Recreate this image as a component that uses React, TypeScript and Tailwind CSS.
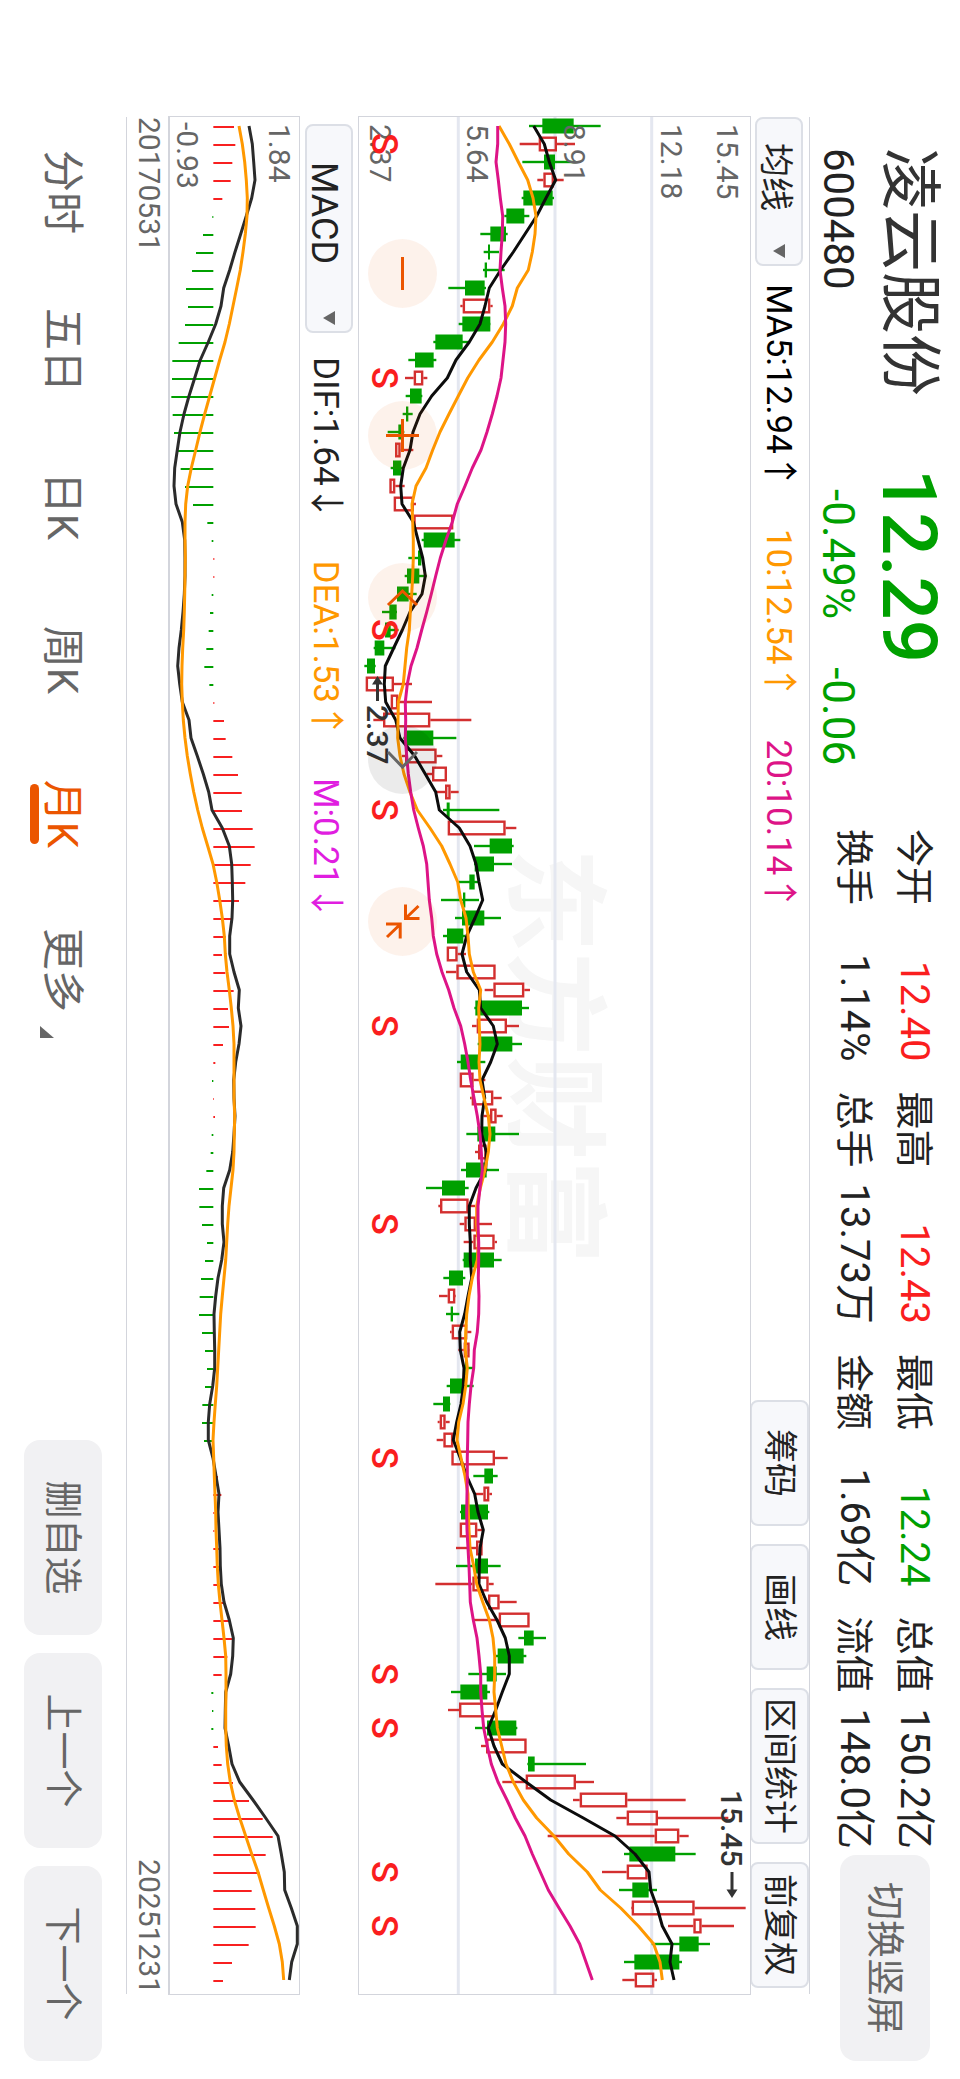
import React from "react";

type Candle = [kind: "G" | "R", low: number, from: number, to: number, high: number];

// One entry per month, measured in thirds of a chart unit above the baseline.
const candles: Candle[] = [
  ["G", 537, 577, 671, 752], ["R", 509, 566, 621, 675], ["G", 517, 582, 615, 678], ["R", 562, 580, 612, 641],
  ["G", 515, 520, 608, 612], ["G", 463, 469, 523, 538], ["G", 391, 421, 468, 473], ["G", 401, 414, 420, 447],
  ["G", 399, 404, 411, 464], ["G", 295, 345, 404, 408], ["R", 331, 338, 421, 428], ["G", 326, 337, 421, 421],
  ["G", 250, 256, 338, 360], ["G", 175, 195, 251, 259], ["R", 165, 191, 220, 232], ["G", 167, 180, 215, 217],
  ["G", 158, 168, 175, 188], ["G", 113, 145, 161, 163], ["R", 135, 135, 152, 190], ["G", 122, 129, 154, 158],
  ["R", 118, 118, 136, 164], ["R", 131, 131, 192, 198], ["R", 190, 190, 310, 310], ["G", 215, 221, 314, 331],
  ["G", 175, 204, 214, 214], ["G", 164, 171, 208, 230], ["G", 141, 141, 176, 200], ["G", 96, 118, 140, 141],
  ["G", 105, 105, 122, 146], ["G", 71, 74, 103, 136], ["G", 43, 51, 75, 77], ["R", 47, 47, 132, 186],
  ["R", 122, 122, 145, 246], ["R", 70, 99, 241, 364], ["G", 160, 165, 250, 319], ["R", 155, 165, 260, 277],
  ["R", 230, 246, 291, 291], ["R", 255, 285, 302, 326], ["G", 279, 290, 299, 448], ["R", 293, 293, 467, 499],
  ["G", 372, 419, 486, 491], ["G", 372, 374, 432, 486], ["G", 327, 358, 374, 385], ["G", 273, 339, 346, 387],
  ["G", 315, 336, 403, 453], ["G", 279, 291, 340, 345], ["R", 290, 290, 323, 348], ["R", 288, 319, 437, 437],
  ["R", 404, 430, 523, 540], ["G", 373, 376, 516, 537], ["R", 366, 380, 471, 507], ["G", 383, 386, 487, 516],
  ["G", 321, 332, 386, 406], ["R", 329, 329, 371, 406], ["R", 360, 365, 430, 455], ["R", 400, 420, 440, 458],
  ["G", 349, 382, 436, 507], ["R", 375, 384, 410, 412], ["G", 333, 348, 410, 447], ["G", 228, 276, 345, 356],
  ["R", 265, 270, 356, 375], ["R", 329, 343, 378, 426], ["R", 341, 370, 434, 441], ["G", 338, 341, 432, 455],
  ["G", 280, 297, 339, 346], ["R", 267, 293, 316, 318], ["G", 288, 302, 309, 328], ["R", 300, 305, 352, 364],
  ["R", 325, 341, 359, 360], ["G", 340, 345, 352, 370], ["G", 290, 300, 340, 371], ["G", 250, 279, 300, 301],
  ["R", 263, 269, 287, 299], ["R", 260, 280, 310, 312], ["R", 304, 304, 435, 473], ["G", 370, 403, 429, 443],
  ["R", 375, 400, 418, 426], ["G", 330, 333, 414, 418], ["R", 329, 329, 382, 400], ["R", 318, 378, 398, 398],
  ["G", 318, 375, 414, 452], ["R", 256, 367, 416, 431], ["R", 410, 414, 449, 500], ["R", 370, 446, 539, 539],
  ["G", 505, 522, 551, 588], ["G", 436, 443, 521, 529], ["G", 355, 410, 440, 468], ["G", 303, 331, 412, 420],
  ["R", 294, 327, 440, 440], ["G", 375, 411, 499, 502], ["R", 393, 408, 530, 530], ["G", 532, 534, 554, 708],
  ["R", 457, 527, 678, 732], ["R", 669, 689, 832, 1007], ["R", 799, 830, 924, 1135], ["R", 593, 914, 988, 1016],
  ["G", 822, 838, 976, 1037], ["R", 756, 830, 893, 895], ["G", 807, 847, 896, 921], ["R", 843, 845, 1034, 1187],
  ["R", 954, 1030, 1055, 1152], ["G", 905, 988, 1046, 1080], ["G", 822, 853, 988, 996], ["R", 817, 854, 913, 921],
];

const ma5 = [
  551, 583, 598, 617, 588, 560, 525, 490, 452, 418, 405, 390, 358, 318, 292, 245, 210, 189, 180, 160, 152, 156, 190, 204,
  218, 226, 216, 180, 157, 131, 106, 103, 107, 137, 150, 194, 226, 257, 268, 328, 360, 378, 387, 398, 375, 350, 336, 350,
  388, 392, 430, 442, 422, 396, 404, 396, 395, 409, 407, 378, 358, 358, 361, 361, 365, 354, 344, 329, 331, 342, 340, 333,
  320, 310, 331, 350, 374, 384, 400, 390, 388, 387, 410, 441, 466, 478, 478, 457, 437, 415, 432, 457, 528, 602, 700, 795,
  855, 897, 902, 922, 937, 966, 960, 972,
];

const ma10 = [
  447, 478, 505, 533, 549, 558, 555, 547, 535, 502, 487, 460, 427, 387, 353, 325, 297, 270, 248, 228, 198, 186, 188, 190,
  190, 188, 185, 181, 178, 170, 165, 160, 145, 144, 143, 150, 162, 180, 202, 240, 275, 300, 323, 332, 348, 354, 358, 370,
  392, 386, 388, 390, 387, 390, 402, 415, 420, 415, 405, 391, 380, 380, 385, 382, 367, 357, 350, 347, 346, 352, 347, 339,
  326, 321, 333, 345, 354, 355, 357, 360, 371, 380, 398, 418, 429, 434, 434, 432, 437, 442, 455, 468, 490, 520, 560, 612,
  656, 712, 751, 812, 865, 911, 930, 937,
];

const ma20 = [
  443, 443, 438, 445, 451, 458, 457, 453, 450, 457, 465, 467, 465, 459, 453, 441, 427, 411, 393, 367, 345, 322, 307, 288,
  271, 257, 244, 230, 215, 201, 183, 172, 166, 167, 166, 170, 175, 182, 191, 205, 220, 230, 234, 238, 245, 250, 260, 276,
  296, 312, 332, 344, 354, 362, 372, 382, 390, 394, 397, 390, 384, 384, 386, 386, 385, 387, 386, 382, 373, 371, 363, 358,
  354, 353, 352, 352, 351, 350, 351, 354, 357, 359, 361, 370, 381, 387, 392, 392, 396, 401, 412, 424, 444, 471, 496, 525,
  547, 571, 595, 627, 660, 689, 708, 727,
];

const bars = [
  345, 349, 340, 335, 310, 280, 252, 231, 219, 201, 207, 198, 179, 160, 159, 157, 161, 165, 177, 185, 198, 222, 265, 278,
  286, 286, 278, 273, 269, 262, 256, 271, 286, 315, 320, 340, 357, 368, 369, 401, 407, 395, 379, 360, 340, 320, 309, 319,
  344, 327, 330, 312, 289, 279, 285, 288, 278, 275, 262, 240, 241, 249, 264, 258, 246, 242, 240, 249, 258, 264, 258, 250,
  249, 255, 287, 297, 307, 286, 286, 300, 300, 300, 312, 330, 343, 325, 308, 277, 279, 277, 297, 308, 342, 390, 431, 461,
  440, 421, 398, 409, 410, 389, 339, 312,
];

const dif = [
  390, 400, 404, 408, 398, 382, 365, 348, 332, 314, 306, 290, 268, 244, 227, 210, 195, 183, 175, 167, 165, 171, 190, 197,
  198, 198, 196, 192, 187, 180, 176, 182, 190, 210, 216, 235, 253, 269, 279, 310, 331, 338, 340, 341, 339, 332, 332, 345,
  361, 358, 366, 360, 350, 344, 345, 348, 345, 341, 332, 314, 310, 310, 315, 308, 297, 290, 285, 286, 287, 287, 281, 272,
  268, 268, 282, 291, 300, 297, 300, 303, 304, 307, 315, 331, 343, 341, 335, 320, 319, 318, 329, 339, 362, 402, 440, 477,
  487, 496, 497, 517, 535, 535, 518, 511,
];

const dea = [
  360, 370, 377, 382, 385, 384, 379, 372, 364, 353, 342, 331, 318, 302, 287, 272, 257, 243, 230, 217, 206, 200, 198, 198,
  199, 198, 197, 196, 194, 191, 189, 188, 190, 193, 198, 205, 214, 224, 236, 250, 266, 282, 293, 302, 310, 316, 319, 324,
  331, 337, 342, 345, 345, 345, 345, 347, 346, 345, 342, 336, 330, 326, 323, 320, 315, 310, 305, 302, 299, 296, 293, 289,
  285, 282, 284, 286, 288, 290, 291, 293, 295, 298, 303, 309, 315, 320, 321, 321, 320, 320, 322, 326, 334, 346, 362, 380,
  398, 417, 433, 449, 466, 481, 490, 494,
];

const sellMonths = [1, 14, 28, 38, 50, 61, 74, 86, 89, 97, 100];
const ZERO = 283;

const at = (i: number) => 9 + 18 * i;
const priceY = (v: number) => 400 - v / 3;
const macdY = (v: number) => 180 - v / 3;
const trace = (values: number[], y: (v: number) => number) =>
  values.map((v, i) => `${at(i)},${y(v).toFixed(1)}`).join(" ");

function CandleMark({ candle, index }: { candle: Candle; index: number }) {
  const [kind, low, from, to, high] = candle;
  const x = at(index);
  const top = priceY(to);
  const height = (to - from) / 3;
  if (kind === "G") {
    return (
      <g fill="#00a000">
        <rect x={x - 1.2} y={priceY(high)} width={2.4} height={(high - low) / 3} />
        <rect x={x - 7.5} y={top} width={15} height={height} />
      </g>
    );
  }
  return (
    <g stroke="#d32f2f" strokeWidth={2.4} fill="none">
      <line x1={x} x2={x} y1={priceY(high)} y2={top} />
      <line x1={x} x2={x} y1={priceY(from)} y2={priceY(low)} />
      <rect x={x - 6.3} y={top + 1.2} width={12.6} height={Math.max(height - 2.4, 1)} />
    </g>
  );
}

function PriceChart() {
  return (
    <svg viewBox="0 0 1877 391" className="block w-full" role="img" aria-label="月K">
      <text x={939} y={233} textAnchor="middle" fontSize={104} fontWeight={700} fill="#f6f6f6">东方财富</text>
      <g stroke="#e4e7f0" strokeWidth={3}>
        <line x1={0} x2={1877} y1={98.3} y2={98.3} />
        <line x1={0} x2={1877} y1={195} y2={195} />
        <line x1={0} x2={1877} y1={291.7} y2={291.7} />
      </g>
      {candles.map((c, i) => (
        <CandleMark key={i} candle={c} index={i} />
      ))}
      <g fontSize={30} fill="#666">
        <text x={7} y={33}>15.45</text>
        <text x={7} y={89}>12.18</text>
        <text x={7} y={186}>8.91</text>
        <text x={7} y={283}>5.64</text>
        <text x={7} y={380}>2.37</text>
      </g>
      <g fill="none" strokeWidth={3} strokeLinejoin="round">
        <polyline points={trace(ma5, priceY)} stroke="#0c0c0c" />
        <polyline points={trace(ma10, priceY)} stroke="#ff9800" />
        <polyline points={trace(ma20, priceY)} stroke="#dd1487" />
      </g>
      <g fontSize={36} fontWeight={500} fill="#fa1e1e" textAnchor="middle">
        {sellMonths.map((m) => (
          <text key={m} x={at(m)} y={378}>S</text>
        ))}
      </g>
      <g fontSize={30} fontWeight={500} fill="#333">
        <path d="M559 372.500L567.500 367v4H584v3H567.500v4Z" />
        <text x={588} y={383}>2.37</text>
        <text x={1673} y={29}>15.45</text>
        <path d="M1781 18L1772.500 12.500v4H1755v3h17.500v4Z" />
      </g>
    </svg>
  );
}

function MacdChart() {
  return (
    <svg viewBox="0 0 1877 129" className="block w-full" role="img" aria-label="MACD">
      {bars.map((v, i) => (
        <rect
          key={i}
          x={at(i)}
          y={macdY(Math.max(v, ZERO))}
          width={2}
          height={Math.abs(v - ZERO) / 3}
          fill={v > ZERO ? "#f82020" : "#00a000"}
        />
      ))}
      <g fontSize={30} fill="#666">
        <text x={7} y={30}>1.84</text>
        <text x={5} y={122}>-0.93</text>
      </g>
      <g fill="none" strokeWidth={3} strokeLinejoin="round">
        <polyline points={trace(dif, macdY)} stroke="#2b2b2b" />
        <polyline points={trace(dea, macdY)} stroke="#ff9800" />
      </g>
    </svg>
  );
}

function Picker({ label, value, size }: { label: string; value: string; size: string }) {
  return (
    <label className={`relative block h-12 ${size}`}>
      <select
        aria-label={label}
        className="h-full w-full appearance-none rounded-lg border-2 border-[#dcdfe6] bg-[#f7f8fb] text-[#222]"
        defaultValue={value}
      >
        <option>{value}</option>
      </select>
      <svg viewBox="0 0 14 12" className="pointer-events-none absolute top-[18px] right-2 h-3 w-3.5">
        <path d="M0 0h14L7 12Z" fill="#666" />
      </svg>
    </label>
  );
}

const stats = [
  { label: "今开", value: "12.40", tone: "text-[#fa1e1e]" },
  { label: "最高", value: "12.43", tone: "text-[#fa1e1e]" },
  { label: "最低", value: "12.24", tone: "text-[#00a000]" },
  { label: "总值", value: "150.2亿", tone: "text-[#222]" },
  { label: "换手", value: "1.14%", tone: "text-[#222]" },
  { label: "总手", value: "13.73万", tone: "text-[#222]" },
  { label: "金额", value: "1.69亿", tone: "text-[#222]" },
  { label: "流值", value: "148.0亿", tone: "text-[#222]" },
];

const tools = [
  { label: "筹码", size: "w-[126px]" },
  { label: "画线", size: "w-[126px]" },
  { label: "区间统计", size: "w-[156px]" },
  { label: "前复权", size: "w-[126px]" },
];

const chartActions = [
  { label: "缩小", d: "M18 34.500H51", off: false },
  { label: "放大", d: "M18 34.500H51M34.500 18V51", off: false },
  { label: "左移", d: "M42 20L28 34.500L42 49", off: false },
  { label: "右移", d: "M27 20L42 34.500L27 49", off: true },
  { label: "收起", d: "M19 18.500L31 31M17.500 31.500H31.500V17.500M50 50L38 37.500M37 51V36.800H51.500", off: false },
];

const periods = ["分时", "五日", "日K", "周K", "月K"];

export default function App() {
  return (
    <div className="relative h-screen w-screen overflow-hidden bg-white">
      <main className="absolute top-0 left-full flex h-[100vw] w-[100vh] origin-top-left rotate-90 flex-col bg-white font-[Roboto,'Noto_Sans_CJK_SC',sans-serif] whitespace-nowrap text-[#222]">
        <header className="flex h-[150px] shrink-0 pt-4 pl-[148px]">
          <div className="w-[321px] pt-1">
            <h1 className="text-[62px] leading-[62px] text-[#333]">凌云股份</h1>
            <p className="mt-4 text-[42px] leading-[48px]">600480</p>
          </div>
          <div className="w-[360px] pt-1 text-[#00a000]">
            <p className="text-[76px] leading-[62px] font-medium">12.29</p>
            <p className="mt-4 flex gap-12 pl-5 text-[44px] leading-[48px]">
              <span>-0.49%</span>
              <span>-0.06</span>
            </p>
          </div>
          <dl className="grid flex-1 grid-cols-4 content-start gap-x-[30px] text-[38px] leading-[60px]">
            {stats.map((s) => (
              <div key={s.label} className="flex justify-between">
                <dt>{s.label}</dt>
                <dd className={`text-[40px] ${s.tone}`}>{s.value}</dd>
              </div>
            ))}
          </dl>
          <button className="mt-3.5 mr-[18px] ml-1.5 h-[90px] w-[206px] rounded-2xl bg-[#f1f1f3] text-[38px] text-[#666]">
            切换竖屏
          </button>
        </header>

        <div className="mr-[85px] ml-[117px] border-b border-[#d3d5dc]">
          <div className="flex h-[60px] items-center border-t border-[#d3d5dc] pr-1.5">
            <Picker label="主图指标" value="均线" size="w-[149px] text-[34px] [&>select]:pl-6" />
            <p className="flex gap-10 pt-1 pl-[18px] text-[35px]">
              <span className="text-black">MA5:12.94↑</span>
              <span className="text-[#ff9800]">10:12.54↑</span>
              <span className="text-[#dd1487]">20:10.14↑</span>
            </p>
            <div className="ml-auto flex h-full gap-[18px] text-[34px]">
              {tools.map((t) => (
                <button key={t.label} className={`rounded-lg border-2 border-[#dcdfe6] bg-[#f7f8fb] ${t.size}`}>
                  {t.label}
                </button>
              ))}
            </div>
          </div>

          <div className="relative outline outline-[#d3d5dc]">
            <PriceChart />
            <div className="absolute bottom-[9px] left-[122px] flex gap-[93px]">
              {chartActions.map((a) => (
                <button
                  key={a.label}
                  aria-label={a.label}
                  disabled={a.off}
                  className={
                    a.off
                      ? "size-[69px] rounded-full bg-black/8 text-[#666]"
                      : "size-[69px] rounded-full bg-[#eb5500]/8 text-[#eb5500]"
                  }
                >
                  <svg viewBox="0 0 69 69" className="size-full" fill="none" stroke="currentColor" strokeWidth={3}>
                    <path d={a.d} />
                  </svg>
                </button>
              ))}
            </div>
          </div>

          <div className="flex h-[60px] items-center pl-[7px]">
            <Picker label="副图指标" value="MACD" size="w-[209px] text-[36px] [&>select]:pl-9" />
            <p className="flex gap-10 pt-2 pl-6 text-[35px]">
              <span>DIF:1.64↓</span>
              <span className="text-[#ff9800]">DEA:1.53↑</span>
              <span className="text-[#e01ee0]">M:0.21↓</span>
            </p>
          </div>

          <div className="border-b border-[#d3d5dc] outline outline-[#d3d5dc]">
            <MacdChart />
          </div>
          <div className="flex h-[42px] items-center justify-between pb-1 text-[30px] text-[#666]">
            <time dateTime="2017-05-31">20170531</time>
            <time dateTime="2025-12-31">20251231</time>
          </div>
        </div>

        <footer className="mt-6 mr-[18px] ml-[150px] flex h-[78px] justify-between text-[#666]">
          <nav className="flex gap-[74px] text-[42px]">
            {periods.map((p) => (
              <a
                key={p}
                href="#"
                aria-current={p === "月K" ? "page" : undefined}
                className="relative flex min-w-20 items-center justify-center aria-[current=page]:text-[#eb5500]"
              >
                {p}
                {p === "月K" && <i className="absolute bottom-1.5 h-[9px] w-[60px] rounded-full bg-[#eb5500]" />}
              </a>
            ))}
            <button className="flex items-center gap-3.5">
              更多
              <svg viewBox="0 0 12 14" className="mt-8 h-3.5 w-3" fill="currentColor">
                <path d="M12 0V14H0Z" />
              </svg>
            </button>
          </nav>
          <div className="flex gap-[18px] text-[38px]">
            <button className="w-[195px] rounded-2xl bg-[#f1f1f3]">删自选</button>
            <button className="w-[195px] rounded-2xl bg-[#f1f1f3]">上一个</button>
            <button className="w-[195px] rounded-2xl bg-[#f1f1f3]">下一个</button>
          </div>
        </footer>
      </main>
    </div>
  );
}
